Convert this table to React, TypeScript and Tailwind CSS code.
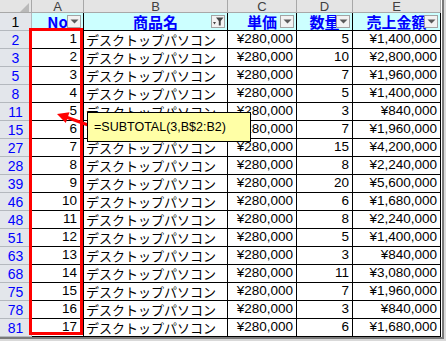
const rows: [number, number, number, string][] = [
  [2, 1, 5, "¥1,400,000"],
  [3, 2, 10, "¥2,800,000"],
  [5, 3, 7, "¥1,960,000"],
  [8, 4, 5, "¥1,400,000"],
  [11, 5, 3, "¥840,000"],
  [15, 6, 7, "¥1,960,000"],
  [27, 7, 15, "¥4,200,000"],
  [28, 8, 8, "¥2,240,000"],
  [39, 9, 20, "¥5,600,000"],
  [46, 10, 6, "¥1,680,000"],
  [48, 11, 8, "¥2,240,000"],
  [51, 12, 5, "¥1,400,000"],
  [63, 13, 3, "¥840,000"],
  [68, 14, 11, "¥3,080,000"],
  [75, 15, 7, "¥1,960,000"],
  [78, 16, 3, "¥840,000"],
  [81, 17, 6, "¥1,680,000"],
];

const num = "font-['Liberation_Sans',Arial,sans-serif]";
const jp = "font-['Noto_Sans_CJK_JP','Noto_Sans_CJK_SC',sans-serif]";

function DropButton({ filtered }: { filtered?: boolean }) {
  return (
    <div className="absolute right-[2px] top-[2px] flex h-[13px] w-[14px] items-center justify-center border border-[#a3a3a3] bg-[#f2f2f2]">
      {filtered ? (
        <svg width="12" height="11" viewBox="0 0 12 11">
          <path d="M1 6 L4 6 L2.5 8.5 Z" fill="#444" />
          <path d="M4 1.5 H11.5 L8.7 5 V9.5 H6.8 V5 Z" fill="#444" />
        </svg>
      ) : (
        <svg width="9" height="5" viewBox="0 0 9 5">
          <path d="M0.5 0.5 H8.5 L4.5 4.5 Z" fill="#5a5a5a" />
        </svg>
      )}
    </div>
  );
}

function HeadCell({ label, filtered }: { label: string; filtered?: boolean }) {
  return (
    <div className="relative flex items-center justify-center overflow-hidden whitespace-nowrap border-r border-b border-black bg-[#ccffff]">
      <span className={`${jp} text-[15px] font-bold leading-none text-[#0000ff]`}>{label}</span>
      <DropButton filtered={filtered} />
    </div>
  );
}

export default function App() {
  const colHead = `flex items-center justify-center border-r border-b border-[#a8a8a8] bg-[#e4e4e4] text-[13px] leading-none text-[#404040] ${num}`;
  const rowHead = `flex items-center justify-center border-r border-b border-[#b4b8be] bg-[#e3e6eb] text-[14px] leading-none ${num}`;
  const cell = "flex items-center border-r border-b border-black bg-white whitespace-nowrap overflow-hidden";

  return (
    <div className="relative h-[341px] w-[446px] overflow-hidden bg-[#d9d9d9]">
      <div className="h-[339px] w-[444px] border-r-2 border-b-2 border-[#7a7a7a] bg-[#dcdcdc]">
        <div className="grid grid-cols-[32px_52px_144px_69px_56px_88px] grid-rows-[13px_18px_repeat(17,18px)] bg-white">
          <div className="relative border-r border-b border-[#a8a8a8] bg-[#e4e4e4]">
            <svg className="absolute left-[20px] top-[3px]" width="9" height="9" viewBox="0 0 9 9">
              <path d="M9 0 V9 H0 Z" fill="#b9b9b9" />
            </svg>
          </div>
          {["A", "B", "C", "D", "E"].map((c) => (
            <div key={c} className={colHead}>
              {c}
            </div>
          ))}

          <div className={`${rowHead} text-black`}>1</div>
          <HeadCell label="No" />
          <HeadCell label="商品名" filtered />
          <HeadCell label="単価" />
          <HeadCell label="数量" />
          <HeadCell label="売上金額" />

          {rows.map(([r, no, qty, total]) => (
            <div key={r} className="contents">
              <div className={`${rowHead} text-[#0000ff]`}>{r}</div>
              <div className={`${cell} justify-end bg-[#fde9d9] pr-[6px] text-[13.5px] ${num}`}>{no}</div>
              <div className={`${cell} pl-[2px] text-[13px] leading-none ${jp}`}>デスクトップパソコン</div>
              <div className={`${cell} justify-end pr-[3px] text-[13.5px] ${num}`}>¥280,000</div>
              <div className={`${cell} justify-end pr-[3px] text-[13.5px] ${num}`}>{qty}</div>
              <div className={`${cell} justify-end pr-[3px] text-[13.5px] ${num}`}>{total}</div>
            </div>
          ))}
        </div>
      </div>

      <div className="absolute left-[29px] top-[28px] h-[307px] w-[54px] border-[3px] border-[#ff0000]" />

      <svg className="absolute left-[50px] top-[104px]" width="40" height="26" viewBox="0 0 40 26">
        <line x1="38" y1="21" x2="16" y2="13" stroke="#ff0000" strokeWidth="3" />
        <path d="M7 10 L19.5 8.2 L15.8 19 Z" fill="#ff0000" />
      </svg>

      <div className={`absolute left-[87px] top-[112px] flex h-[30px] w-[164px] items-center border border-black bg-[#ffffa6] pl-[6px] text-[12.5px] text-black ${num}`}>
        =SUBTOTAL(3,B$2:B2)
      </div>
    </div>
  );
}
